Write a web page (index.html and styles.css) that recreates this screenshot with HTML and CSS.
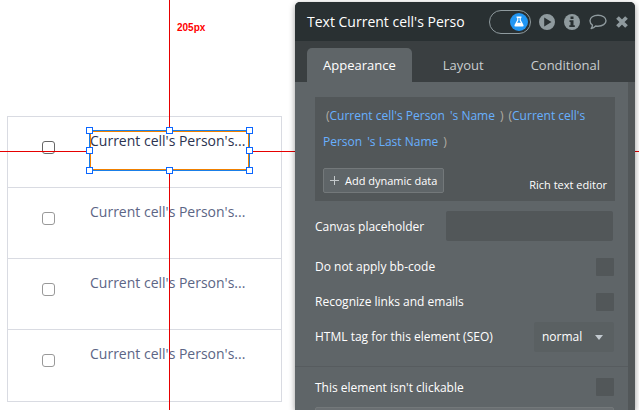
FILE: index.html
```
<!DOCTYPE html>
<html lang="en">
<head>
  <meta charset="UTF-8" />
  <meta name="viewport" content="width=device-width, initial-scale=1.0" />
  <title>Page editor</title>
  <link rel="stylesheet" href="styles.css">
</head>
<body>
  <div class="editor">
    <main class="canvas">
      <div class="repeating-group">
        <div class="cell selected">
          <input type="checkbox" class="cell-check" aria-label="Select person 1" />
          <div class="cell-text">Current cell's Person's...
            <div class="selection">
              <i class="handle nw"></i><i class="handle n"></i><i class="handle ne"></i>
              <i class="handle w"></i><i class="handle e"></i>
              <i class="handle sw"></i><i class="handle s"></i><i class="handle se"></i>
            </div>
          </div>
        </div>
        <div class="cell">
          <input type="checkbox" class="cell-check" aria-label="Select person 2" />
          <div class="cell-text">Current cell's Person's...</div>
        </div>
        <div class="cell">
          <input type="checkbox" class="cell-check" aria-label="Select person 3" />
          <div class="cell-text">Current cell's Person's...</div>
        </div>
        <div class="cell">
          <input type="checkbox" class="cell-check" aria-label="Select person 4" />
          <div class="cell-text">Current cell's Person's...</div>
        </div>
      </div>
    </main>

    <div class="guide guide-top"></div>
    <div class="guide guide-bottom"></div>
    <div class="guide guide-left"></div>
    <div class="guide guide-right"></div>
    <span class="guide-label">205px</span>

    <aside class="panel">
      <header class="panel-header">
        <h1 class="panel-title">Text Current cell's Perso</h1>
        <button class="toggle" aria-label="Experimental features">
          <span class="knob">
            <svg width="10" height="11" viewBox="0 0 10 11"><path d="M2.500 0.500h5v1.200H6.800V4L9.500 9q.5 1.500-1 1.500h-7Q0 10.500.5 9L3.200 4V1.700h-.7z" fill="#fff"/><path d="M4.400 2v2.400L3.100 6.800h3.800L5.600 4.400V2z" fill="#2196f3"/></svg>
          </span>
        </button>
        <button class="icon-btn" aria-label="Preview">
          <svg width="16" height="16" viewBox="0 0 16 16"><path fill-rule="evenodd" d="M8 0a8 8 0 1 0 0 16A8 8 0 0 0 8 0zM5.200 3.600v8.800L12.500 8z" fill="#8f9a9e"/></svg>
        </button>
        <button class="icon-btn" aria-label="Reference">
          <svg width="16" height="16" viewBox="0 0 16 16"><circle cx="8" cy="8" r="8" fill="#8f9a9e"/><path d="M6.500 2.500h3v2.500h-3zM5.500 6.300h4v5h1.300v1.700H5.300v-1.700h1.200V8h-1z" fill="#293032"/></svg>
        </button>
        <button class="icon-btn" aria-label="Comment">
          <svg width="18" height="16" viewBox="0 0 18 16"><path d="M9 1.200c4.500 0 8 2.400 8 5.500s-3.500 5.500-8 5.500c-.8 0-1.600-.1-2.300-.2-1.200 1.300-2.700 2.200-4.500 2.500.9-1 1.300-2.200 1.200-3.500C1.900 10 1 8.500 1 6.700c0-3.100 3.500-5.500 8-5.500z" fill="none" stroke="#8f9a9e" stroke-width="1.400" stroke-linejoin="round"/></svg>
        </button>
        <button class="icon-btn close" aria-label="Close">
          <svg width="12" height="12" viewBox="0 0 12 12"><path d="M1.500 1.500l9 9M10.500 1.500l-9 9" stroke="#8f9a9e" stroke-width="3.800"/></svg>
        </button>
      </header>

      <nav class="tabs" role="tablist">
        <button class="tab active" role="tab" aria-selected="true">Appearance</button>
        <button class="tab" role="tab">Layout</button>
        <button class="tab" role="tab">Conditional</button>
      </nav>

      <div class="panel-body">
        <div class="properties">
          <div class="composer">
            <div class="expression">
              <div class="line indent"><span class="paren">(</span><span>Current cell's Person</span><span class="spaced">'s Name</span><span class="paren spaced">)</span><span class="paren spaced">(</span><span>Current cell's</span></div>
              <div class="line"><span>Person</span><span class="spaced">'s Last Name</span><span class="paren spaced">)</span></div>
            </div>
            <div class="composer-actions">
              <button class="add-data"><svg width="9" height="9" viewBox="0 0 9 9"><path d="M4.500 0v9M0 4.500h9" stroke="#c3c8ca"/></svg>Add dynamic data</button>
              <a class="rich-text" href="#">Rich text editor</a>
            </div>
          </div>
          <div class="row row-input">
            <label for="placeholder">Canvas placeholder</label>
            <input type="text" id="placeholder" class="text-input" />
          </div>
          <div class="row">
            <label for="bbcode">Do not apply bb-code</label>
            <input type="checkbox" id="bbcode" class="prop-check" />
          </div>
          <div class="row">
            <label for="links">Recognize links and emails</label>
            <input type="checkbox" id="links" class="prop-check" />
          </div>
          <div class="row">
            <label for="tag">HTML tag for this element (SEO)</label>
            <div class="select-wrap">
              <select id="tag" class="prop-select">
                <option>normal</option>
                <option>h1</option>
                <option>h2</option>
              </select>
            </div>
          </div>
          <hr class="divider">
          <div class="row row-tall">
            <label for="clickable">This element isn't clickable</label>
            <input type="checkbox" id="clickable" class="prop-check" />
          </div>
          <button class="style-btn" aria-label="Start workflow"></button>
        </div>
        <div class="scrollbar"></div>
      </div>
    </aside>
  </div>
</body>
</html>
```
FILE: styles.css
```
* {
  box-sizing: border-box;
}
body {
  margin: 0;
  background: #fff;
  font-family: "Open Sans", sans-serif;
}
button, input, select {
  font-family: inherit;
  margin: 0;
}
button {
  padding: 0;
  border: none;
  background: none;
}
.editor {
  position: relative;
  display: flex;
  height: 100vh;
  overflow: hidden;
}

/* canvas */
.canvas {
  flex: 1;
  padding: 116px 13px 0 7px;
}
.repeating-group {
  border: 1px solid #d9dbe2;
}
.cell {
  display: flex;
  height: 71px;
  padding: 14px 32px 0 34px;
  border-bottom: 1px solid #d9dbe2;
}
.cell:last-child {
  border-bottom: none;
}
.cell-check {
  appearance: none;
  width: 13px;
  height: 13px;
  margin: 10px 35px 0 0;
  border: 1px solid #999;
  border-radius: 3px;
  background: #fff;
}
.cell-text {
  position: relative;
  flex: 1;
  height: 39px;
  font-size: 14px;
  line-height: 20px;
  color: #5c6585;
  white-space: nowrap;
}
.selected .cell-check {
  border-color: #666;
}
.selected .cell-text {
  color: #2c3350;
}
.selection {
  position: absolute;
  inset: -1px;
  border: 1px solid #1a7fe8;
  outline: 1px solid #f08000;
  outline-offset: -2px;
}
.handle {
  position: absolute;
  z-index: 1;
  width: 7px;
  height: 7px;
  border: 1px solid #0a66ff;
  background: #fff;
}
.nw, .n, .ne {
  top: -4px;
}
.w, .e {
  top: 16px;
}
.sw, .s, .se {
  bottom: -4px;
}
.nw, .w, .sw {
  left: -4px;
}
.n, .s {
  left: 76px;
}
.ne, .e, .se {
  right: -4px;
}

/* alignment guides */
.guide {
  position: absolute;
  background: #e60000;
}
.guide-top {
  left: 169px;
  top: 0;
  width: 1px;
  height: 130px;
}
.guide-bottom {
  left: 169px;
  top: 171px;
  bottom: 0;
  width: 1px;
}
.guide-left {
  left: 0;
  top: 151px;
  width: 89px;
  height: 1px;
}
.guide-right {
  left: 250px;
  right: 0;
  top: 151px;
  height: 1px;
}
.guide-label {
  position: absolute;
  left: 177px;
  top: 22px;
  font: bold 10px/12px "Liberation Sans", sans-serif;
  color: #f00;
}

/* property panel */
.panel {
  position: relative;
  display: flex;
  flex: none;
  flex-direction: column;
  width: 340px;
  margin: 2px 4px 0 0;
  border-radius: 5px 5px 0 0;
  background: #3a3f41;
  box-shadow: 0 2px 6px rgba(0, 0, 0, 0.4);
}
.panel-header {
  display: flex;
  flex: none;
  align-items: center;
  height: 39px;
  padding: 0 7px 0 12px;
  border-radius: 5px 5px 0 0;
  background: #293032;
}
.panel-title {
  flex: 1;
  margin: 0;
  font-size: 14px;
  font-weight: 400;
  color: #fff;
  white-space: nowrap;
}
.toggle {
  display: flex;
  justify-content: flex-end;
  align-items: center;
  width: 42px;
  height: 24px;
  margin-right: 8px;
  padding-right: 2px;
  border: 1px solid #8f9a9e;
  border-radius: 12px;
}
.knob {
  display: flex;
  align-items: center;
  justify-content: center;
  width: 18px;
  height: 18px;
  border-radius: 50%;
  background: #2196f3;
}
.icon-btn {
  display: flex;
  margin-right: 9px;
}
.close {
  margin-right: 0;
}
.tabs {
  display: flex;
  flex: none;
  height: 41px;
  padding: 7px 12px 0;
}
.tab {
  padding: 0 16px;
  border-radius: 5px 5px 0 0;
  font-size: 13px;
  color: #c9cdcf;
}
.tab + .tab {
  margin-left: 15px;
}
.tab.active {
  background: #5f6568;
  color: #fff;
}
.panel-body {
  display: flex;
  flex: 1;
}
.properties {
  flex: 1;
  padding-top: 15px;
  background: #5f6568;
}
.scrollbar {
  width: 7px;
  background: #525759;
}
.composer {
  height: 104px;
  margin: 0 13px 10px 20px;
  padding: 6px 8px 8px;
  background: #525759;
}
.expression {
  margin-bottom: 13px;
  font-size: 12px;
  line-height: 26px;
  color: #68b0ff;
}
.line {
  display: flex;
  white-space: nowrap;
}
.indent {
  padding-left: 3px;
}
.paren {
  color: #b3ada2;
}
.spaced {
  margin-left: 5px;
}
.composer-actions {
  display: flex;
  justify-content: space-between;
  align-items: center;
}
.add-data {
  display: flex;
  align-items: center;
  gap: 6px;
  height: 25px;
  padding: 0 6px;
  border: 1px solid #73787a;
  border-radius: 2px;
  background: #5f6568;
  font-size: 11px;
  color: #fff;
}
.rich-text {
  padding-top: 8px;
  font-size: 11px;
  color: #fff;
  text-decoration: none;
}
.row {
  display: flex;
  align-items: center;
  justify-content: space-between;
  height: 35px;
  padding: 0 14px 0 20px;
  font-size: 12px;
  color: #fff;
}
.row-input {
  height: 30px;
  padding-right: 15px;
  margin-bottom: 8px;
}
.row-tall {
  height: 40px;
}
.text-input {
  width: 167px;
  height: 30px;
  border: none;
  border-radius: 2px;
  background: #525759;
  color: #fff;
}
.prop-check {
  appearance: none;
  width: 18px;
  height: 18px;
  border-radius: 1px;
  background: #525759;
}
.select-wrap {
  position: relative;
}
.select-wrap::after {
  content: "";
  position: absolute;
  right: 11px;
  top: 13px;
  border: 4px solid transparent;
  border-top: 5px solid #c3cad0;
  border-bottom: none;
}
.prop-select {
  appearance: none;
  display: block;
  width: 80px;
  height: 30px;
  padding: 0 8px;
  border: none;
  border-radius: 2px;
  background: #5a6062;
  font-size: 12px;
  color: #fff;
}
.divider {
  margin: 12px 0 0;
  border: none;
  border-top: 1px solid #575c5f;
}
.style-btn {
  display: block;
  width: calc(100% - 34px);
  height: 30px;
  margin-left: 20px;
  border: 1px solid #73787a;
  border-radius: 2px;
  background: #6a6f72;
}
```
